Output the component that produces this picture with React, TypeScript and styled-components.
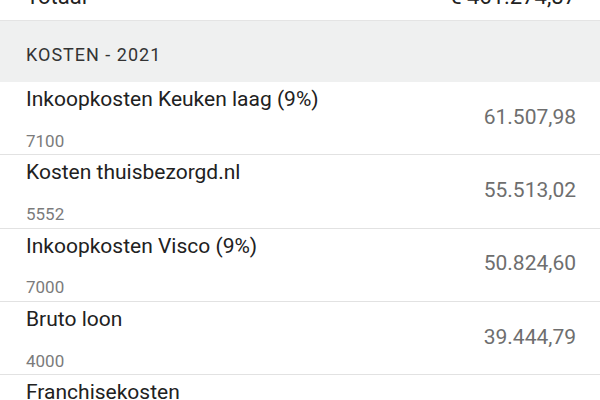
import React from "react";
import styled, { createGlobalStyle } from "styled-components";

const GlobalStyle = createGlobalStyle`
  html, body {
    margin: 0;
    padding: 0;
    background: #ffffff;
    overflow: hidden;
  }
  body {
    font-family: Roboto, "Noto Sans", "Liberation Sans", sans-serif;
    -webkit-font-smoothing: antialiased;
  }
  * { box-sizing: border-box; }
`;

const Page = styled.div`
  width: 600px;
  margin-top: -36px;
  display: flex;
  flex-direction: column;
`;

const TotalRow = styled.div`
  height: 57px;
  display: flex;
  justify-content: space-between;
  align-items: flex-end;
  padding: 0 24px 10px 26px;
  border-bottom: 1px solid #e4e4e4;
  font-size: 22px;
  line-height: 26px;
  color: #222222;
`;

const SectionHeader = styled.div`
  height: 61px;
  display: flex;
  align-items: flex-end;
  padding: 0 26px 17px;
  background: #eff0f0;
  font-size: 18px;
  letter-spacing: 1px;
  color: #333333;
  line-height: 21px;
`;

const Row = styled.div`
  height: 73.33px;
  display: grid;
  grid-template-columns: 1fr auto;
  padding: 0 24px 0 26px;
  border-bottom: 1px solid #e2e2e2;
`;

const Info = styled.div`
  display: flex;
  flex-direction: column;
  justify-content: space-between;
  padding: 5px 0 3.5px;
  min-width: 0;
`;

const Title = styled.div`
  font-size: 21px;
  color: #212121;
  white-space: nowrap;
`;

const Code = styled.div`
  font-size: 17px;
  color: #7b7b7b;
`;

const Amount = styled.div`
  align-self: center;
  padding-bottom: 3px;
  font-size: 21px;
  color: #6e6e6e;
`;

type Entry = { title: string; code: string; amount: string };

const entries: Entry[] = [
  { title: "Inkoopkosten Keuken laag (9%)", code: "7100", amount: "61.507,98" },
  { title: "Kosten thuisbezorgd.nl", code: "5552", amount: "55.513,02" },
  { title: "Inkoopkosten Visco (9%)", code: "7000", amount: "50.824,60" },
  { title: "Bruto loon", code: "4000", amount: "39.444,79" },
  { title: "Franchisekosten", code: "", amount: "" },
];

export default function App() {
  return (
    <>
      <GlobalStyle />
      <Page>
        <TotalRow>
          <span>Totaal</span>
          <span>€ 461.274,87</span>
        </TotalRow>
        <SectionHeader>KOSTEN - 2021</SectionHeader>
        {entries.map((e) => (
          <Row key={e.title}>
            <Info>
              <Title>{e.title}</Title>
              <Code>{e.code}</Code>
            </Info>
            <Amount>{e.amount}</Amount>
          </Row>
        ))}
      </Page>
    </>
  );
}
